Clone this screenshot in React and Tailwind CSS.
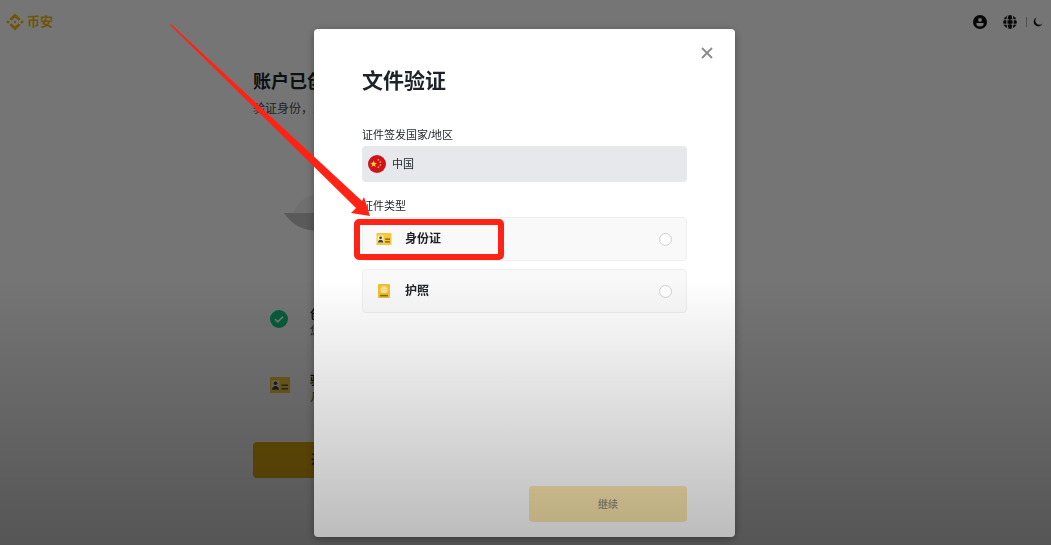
import React, { useState } from "react";

function Logo() {
  return (
    <svg viewBox="0 0 18 18" className="size-[18px] fill-[#f0b90b]" aria-hidden="true">
      <path d="M9 0.5 14.6 6 12.6 7.8 9 4.4 5.4 7.8 3.4 6Z" />
      <path d="M9 17.5 14.6 12 12.6 10.2 9 13.6 5.4 10.2 3.4 12Z" />
      <path d="M9 7.5 10.5 9 9 10.5 7.5 9Z" />
      <path d="M2 7.2 3.8 9 2 10.8 0.2 9Z" />
      <path d="M16 7.2 17.8 9 16 10.8 14.2 9Z" />
    </svg>
  );
}

function AccountIcon() {
  return (
    <svg viewBox="0 0 14 14" className="size-3.5" aria-hidden="true">
      <circle cx="7" cy="7" r="7" fill="#111" />
      <circle cx="7" cy="4.9" r="1.9" fill="#fff" />
      <path d="M3.4 7.9h7.2v1.2a3.6 2.4 0 0 1-7.2 0Z" fill="#fff" />
    </svg>
  );
}

function GlobeIcon() {
  return (
    <svg viewBox="0 0 14 14" className="size-3.5" fill="none" aria-hidden="true">
      <circle cx="7" cy="7" r="6.8" fill="#111" />
      <path d="M0 4.8h14M0 9.2h14" stroke="#fff" strokeWidth="1" />
      <path d="M4.9 0.5C3.6 4.5 3.6 9.5 4.9 13.5M9.1 0.5c1.3 4 1.3 9 0 13" stroke="#fff" strokeWidth="1.1" />
      <path d="M7 0.2v13.6" stroke="#111" strokeWidth="1.2" />
    </svg>
  );
}

function MoonIcon() {
  return (
    <svg viewBox="0 0 10 10" className="size-2.5" aria-hidden="true">
      <path d="M3.6 0.4A4.7 4.7 0 1 0 9.7 6.6 4 4 0 0 1 3.6 0.4Z" fill="#111" />
    </svg>
  );
}

function IdCardIcon({ className }) {
  return (
    <svg viewBox="0 0 20 16" className={className} aria-hidden="true">
      <rect width="20" height="16" rx="1" fill="#f3c93a" />
      <rect x="1.5" y="3.2" width="8" height="9.8" fill="#f9e7a4" />
      <circle cx="5.5" cy="6.3" r="1.8" fill="#3f4047" />
      <path d="M2 12.8c0-5 7-5 7 0Z" fill="#3f4047" />
      <path d="M11.5 8.2h6.5M11.5 11.8h6.5" stroke="#6b5a24" strokeWidth="1.6" />
    </svg>
  );
}

function PassportIcon() {
  return (
    <svg viewBox="0 0 12 14" className="h-3.5 w-3" aria-hidden="true">
      <rect width="12" height="14" rx="1" fill="#f0c02f" />
      <circle cx="6" cy="5.6" r="3.6" fill="#fae08a" />
      <path d="M2.2 11.6h7.6" stroke="#7d671f" strokeWidth="1.6" />
    </svg>
  );
}

function CheckIcon() {
  return (
    <svg viewBox="0 0 18 18" className="size-[18px]" fill="none" aria-hidden="true">
      <circle cx="9" cy="9" r="9" fill="#0ecb81" />
      <path d="m5 9.2 2.8 2.6L13 6.6" stroke="#fff" strokeWidth="1.7" />
    </svg>
  );
}

function ChinaFlag() {
  return (
    <svg viewBox="0 0 18 18" className="size-[18px]" aria-hidden="true">
      <circle cx="9" cy="9" r="9" fill="#d0121b" />
      <path
        d="m5.6 5.4.9 2.4 2.5.1-2 1.6.7 2.4-2.1-1.4-2.1 1.4.7-2.4-2-1.6 2.5-.1Z"
        fill="#ffd23a"
      />
      <g fill="#f58a3c">
        <circle cx="10.4" cy="4.8" r="0.9" />
        <circle cx="12.4" cy="7" r="0.9" />
        <circle cx="12.4" cy="10" r="0.9" />
        <circle cx="10.4" cy="12.2" r="0.9" />
      </g>
    </svg>
  );
}

function Step({ icon, title, note }) {
  return (
    <li className="flex h-[66px] items-start">
      <span className="flex h-6 w-[51px] items-center pl-[11px]">{icon}</span>
      <div>
        <p className="text-xs leading-4 font-bold">{title}</p>
        <p className="text-[11px] leading-4 text-[#474d57]">{note}</p>
      </div>
    </li>
  );
}

function Page() {
  return (
    <div className="min-h-screen bg-white">
      <header className="flex h-[43px] items-center justify-between pr-2 pl-1.5">
        <a href="#" className="flex items-center gap-[3px] text-[13px] font-bold text-[#f0b90b]">
          <Logo />
          币安
        </a>
        <nav className="flex items-center">
          <button type="button" aria-label="账户" className="mr-4"><AccountIcon /></button>
          <button type="button" aria-label="语言" className="mr-[9px]"><GlobeIcon /></button>
          <span className="mr-1.5 h-2.5 w-px bg-[#b0b0b0]" />
          <button type="button" aria-label="主题"><MoonIcon /></button>
        </nav>
      </header>
      <main className="mx-auto max-w-[545px] pt-[25px]">
        <h1 className="text-lg leading-7 font-bold">账户已创建</h1>
        <p className="mt-[3px] text-xs leading-5 text-[#474d57]">验证身份，即可开始交易</p>
        <svg viewBox="0 0 90 60" className="mt-[70px] ml-[31px] h-[60px] w-[90px]" aria-hidden="true">
          <path d="M9 24C13 12 24 5 40 5s28 8 32 19Z" fill="#f1f1f1" />
          <path d="M0 24h80C72 36 60 42 40 42 20 42 10 38 0 24Z" fill="#c4c4c4" />
        </svg>
        <ul className="mt-[58px] ml-1.5">
          <Step icon={<CheckIcon />} title="创建账户" note="您的账户已创建" />
          <Step icon={<IdCardIcon className="h-4 w-5" />} title="验证身份" note="几分钟即可完成" />
        </ul>
        <button type="button" className="mt-[3px] h-9 w-[164px] rounded-sm bg-[#e6b010] text-xs font-bold">
          开始验证
        </button>
      </main>
    </div>
  );
}

function Highlight() {
  return (
    <>
      <span className="pointer-events-none absolute top-px -left-[9px] h-[41px] w-[150px] rounded-[5px] border-6 border-[#ff2316]" />
      <svg
        viewBox="0 0 201 192"
        className="pointer-events-none absolute bottom-full left-[-194px] mb-0.5 h-48 w-[201px]"
        aria-hidden="true"
      >
        <path d="M0 0 3 1 193 177 195 173 201 192 182 189 187 184 2 2Z" fill="#ff2316" />
      </svg>
    </>
  );
}

function Option({ value, label, icon, selected, onSelect, children }) {
  return (
    <label className="relative flex h-11 items-center rounded-sm border border-[#eeeeee] bg-[#f9f9f9] pr-3.5 pl-3">
      <span className="flex w-[30px] items-center"><span className="flex w-[18px] justify-center">{icon}</span></span>
      <span className="flex-1 text-xs font-bold text-[#1e2329]">{label}</span>
      <input
        type="radio"
        name="document"
        value={value}
        checked={selected}
        onChange={() => onSelect(value)}
        className="size-[13px] appearance-none rounded-full border border-[#cfcfcf] bg-white checked:border-4 checked:border-[#f0b90b]"
      />
      {children}
    </label>
  );
}

function VerifyDialog() {
  const [doc, setDoc] = useState("");
  return (
    <div className="fixed inset-0 flex justify-center bg-black/54 pt-[29px] pr-0.5 pb-2">
      <section
        role="dialog"
        aria-modal="true"
        aria-labelledby="verify-title"
        className="flex w-full max-w-[421px] flex-col rounded-[4px] bg-white px-12 pb-[15px] shadow-[0_2px_8px_rgba(0,0,0,0.35)]"
      >
        <button type="button" aria-label="关闭" className="mt-4 -mr-7 self-end p-0.5">
          <svg viewBox="0 0 12 12" className="size-3" aria-hidden="true">
            <path d="m1 1 10 10M11 1 1 11" stroke="#8a8a8a" strokeWidth="1.8" />
          </svg>
        </button>
        <h2 id="verify-title" className="mt-1 text-[21px] leading-8 font-bold text-[#1e2329]">文件验证</h2>
        <label htmlFor="country" className="mt-[30px] text-[11px] leading-4 text-[#1e2329]">
          证件签发国家/地区
        </label>
        <div className="relative mt-[3px] flex">
          <select
            id="country"
            className="h-9 w-full appearance-none rounded-sm bg-[#e6e8eb] pl-[30px] text-[11px] text-[#1e2329]"
          >
            <option>中国</option>
          </select>
          <span className="pointer-events-none absolute inset-y-0 left-1.5 flex items-center">
            <ChinaFlag />
          </span>
        </div>
        <fieldset className="mt-4">
          <legend className="text-[11px] leading-4 text-[#1e2329]">证件类型</legend>
          <div className="mt-[3px] flex flex-col gap-2">
            <Option value="id" label="身份证" icon={<IdCardIcon className="h-3 w-4" />} selected={doc === "id"} onSelect={setDoc}>
              <Highlight />
            </Option>
            <Option value="passport" label="护照" icon={<PassportIcon />} selected={doc === "passport"} onSelect={setDoc} />
          </div>
        </fieldset>
        <button
          type="button"
          className="mt-auto h-9 w-[158px] self-end rounded-sm bg-[#fbe7ad] text-[10px] font-bold text-[#9c9782]"
        >
          继续
        </button>
      </section>
    </div>
  );
}

export default function App() {
  return (
    <div className="font-['Liberation_Sans','Noto_Sans_CJK_SC',sans-serif] text-[#1e2329]">
      <Page />
      <VerifyDialog />
      <div className="pointer-events-none fixed inset-0 bg-linear-to-b from-black/0 from-51% to-black/27" />
    </div>
  );
}
